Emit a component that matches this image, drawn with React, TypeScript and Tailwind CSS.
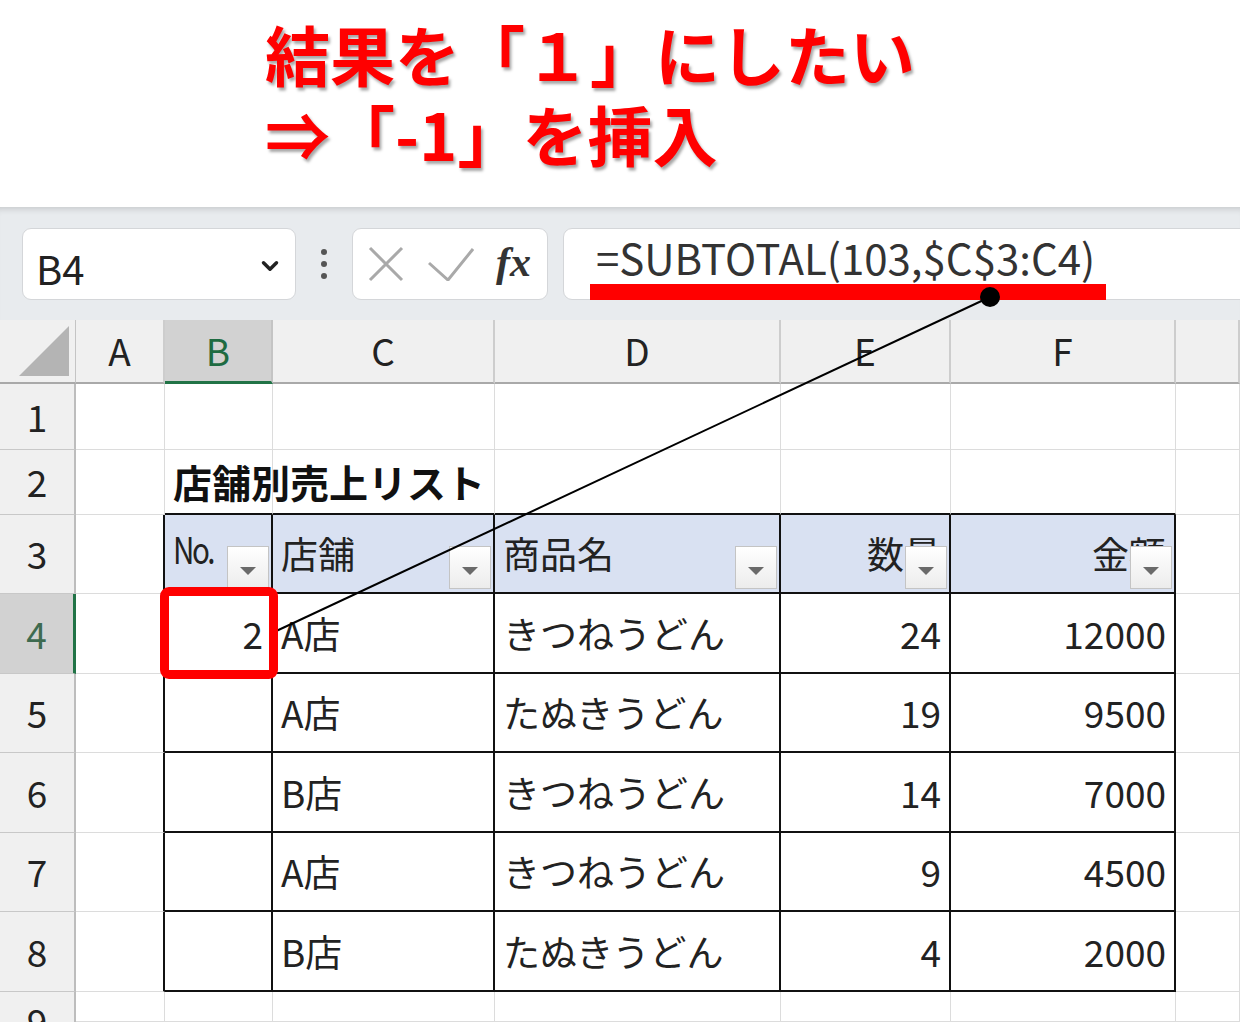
import { ChevronDown } from 'lucide-react';

const letters = ['A', 'B', 'C', 'D', 'E', 'F', ''];

type Cell = { text: string; align?: 'left' | 'right'; bold?: boolean };

const rows: Record<number, Cell[]> = {
  2: [{ text: '' }, { text: '店舗別売上リスト', bold: true }],
  3: [{ text: '' }, { text: 'No.' }, { text: '店舗' }, { text: '商品名' }, { text: '数量', align: 'right' }, { text: '金額', align: 'right' }],
  4: [{ text: '' }, { text: '2', align: 'right' }, { text: 'A店' }, { text: 'きつねうどん' }, { text: '24', align: 'right' }, { text: '12000', align: 'right' }],
  5: [{ text: '' }, { text: '' }, { text: 'A店' }, { text: 'たぬきうどん' }, { text: '19', align: 'right' }, { text: '9500', align: 'right' }],
  6: [{ text: '' }, { text: '' }, { text: 'B店' }, { text: 'きつねうどん' }, { text: '14', align: 'right' }, { text: '7000', align: 'right' }],
  7: [{ text: '' }, { text: '' }, { text: 'A店' }, { text: 'きつねうどん' }, { text: '9', align: 'right' }, { text: '4500', align: 'right' }],
  8: [{ text: '' }, { text: '' }, { text: 'B店' }, { text: 'たぬきうどん' }, { text: '4', align: 'right' }, { text: '2000', align: 'right' }],
};

function FilterButton() {
  return (
    <div className="absolute right-[2px] bottom-[3px] w-[42px] h-[43px] border border-[#c4c4c4] bg-gradient-to-b from-white to-[#ececec] flex items-center justify-center pt-[6px]">
      <div className="w-0 h-0 border-l-[8px] border-r-[8px] border-t-[8px] border-l-transparent border-r-transparent border-t-[#6a6a6a]" />
    </div>
  );
}

function SheetCell({ r, c }: { r: number; c: number }) {
  const inTable = r >= 3 && r <= 8 && c >= 2 && c <= 6;
  const blackRight = inTable || (c === 1 && r >= 3 && r <= 8);
  const blackBottom = inTable || (r === 2 && c >= 2 && c <= 6);
  const cell = rows[r]?.[c - 1];
  const isHead = r === 3 && inTable;

  return (
    <div
      className={[
        'relative flex items-center px-2 overflow-visible',
        blackRight ? 'border-r-2 border-r-[#111]' : 'border-r border-r-[#dcdcdc]',
        blackBottom ? 'border-b-2 border-b-[#111]' : 'border-b border-b-[#dcdcdc]',
        isHead ? 'bg-[#d9e1f2]' : 'bg-white',
        cell?.align === 'right' ? 'justify-end' : 'justify-start',
      ].join(' ')}
    >
      {cell?.text && (
        <span
          className={
            cell.bold
              ? 'relative z-10 whitespace-nowrap text-[39px] font-bold text-[#111] leading-none'
              : cell.text === 'No.'
                ? 'whitespace-nowrap text-[37px] tracking-[-3px] text-[#222] leading-none pb-[10px] scale-x-[0.8] origin-left'
                : 'whitespace-nowrap text-[37px] text-[#222] leading-none'
          }
        >
          {cell.text}
        </span>
      )}
      {isHead && <FilterButton />}
    </div>
  );
}

export default function App() {
  const dataRows = [1, 2, 3, 4, 5, 6, 7, 8, 9];

  return (
    <div className="relative w-[1240px] h-[1022px] overflow-hidden bg-white font-['Noto_Sans_CJK_JP','Noto_Sans',sans-serif]">
      {/* heading */}
      <div className="h-[207px] pl-[265px] pt-[13px] text-[65px] font-bold leading-[80px] text-[#ff0000] [text-shadow:2px_3px_3px_rgba(0,0,0,0.35)]">
        <div>結果を「１」にしたい</div>
        <div>⇒「-1」を挿入</div>
      </div>

      {/* formula bar */}
      <div className="h-[113px] bg-[#e8ebee] shadow-[inset_0_7px_6px_-5px_rgba(0,0,0,0.15)] flex items-start pt-[21px] pl-[22px] overflow-hidden">
        <div className="shrink-0 w-[274px] h-[72px] bg-white border border-[#d4d6d9] rounded-[9px] flex items-center justify-between pl-[13px] pr-[12px]">
          <span className="text-[40px] text-[#222] leading-none pt-[8px]">B4</span>
          <ChevronDown size={26} strokeWidth={3.2} className="text-[#222] mt-[4px]" />
        </div>
        <div className="shrink-0 w-[56px] h-[72px] flex flex-col items-center justify-center gap-[6px]">
          <div className="w-[6px] h-[6px] rounded-full bg-[#555]" />
          <div className="w-[6px] h-[6px] rounded-full bg-[#555]" />
          <div className="w-[6px] h-[6px] rounded-full bg-[#555]" />
        </div>
        <div className="shrink-0 w-[196px] h-[72px] bg-white border border-[#d4d6d9] rounded-[9px] flex items-center pl-[15px]">
          <svg width="36" height="36" viewBox="0 0 36 36" className="shrink-0">
            <path d="M2 2 L34 34 M34 2 L2 34" stroke="#a9a9a9" strokeWidth="3" fill="none" />
          </svg>
          <svg width="46" height="34" viewBox="0 0 46 34" className="ml-[24px] shrink-0">
            <path d="M1 16 L20 33 L45 2" stroke="#a9a9a9" strokeWidth="3" fill="none" />
          </svg>
          <span className="ml-[22px] font-['Liberation_Serif',serif] italic font-bold text-[42px] text-[#333] leading-none pb-[4px]">
            fx
          </span>
        </div>
        <div className="shrink-0 ml-[15px] w-[720px] h-[72px] bg-white border border-[#d4d6d9] rounded-l-[9px] flex items-center pl-[32px] pb-[14px]">
          <span className="text-[42px] text-[#333] leading-none whitespace-nowrap">=SUBTOTAL(103,$C$3:C4)</span>
        </div>
      </div>

      {/* sheet */}
      <div className="grid grid-cols-[76px_89px_108px_222px_286px_170px_225px_1fr] grid-rows-[64px_66px_65px_79px_80px_79px_80px_79px_80px_30px]">
        <div className="relative bg-[#f0f0f0] border-r border-r-[#c4c4c4] border-b-2 border-b-[#a9a9a9]">
          <div className="absolute right-[6px] bottom-[6px] w-0 h-0 border-l-[50px] border-l-transparent border-b-[50px] border-b-[#b4b4b4]" />
        </div>
        {letters.map((l, i) => (
          <div
            key={i}
            className={
              l === 'B'
                ? 'flex items-center justify-center bg-[#d2d2d2] border-r-2 border-r-[#c4c4c4] border-b-[3px] border-b-[#217346] text-[37px] text-[#1e6b41]'
                : 'flex items-center justify-center bg-[#f0f0f0] border-r-2 border-r-[#cdcdcd] border-b-2 border-b-[#a9a9a9] text-[37px] text-[#222]'
            }
          >
            {l}
          </div>
        ))}
        {dataRows.map((r) => (
          <div key={r} className="contents">
            <div
              className={
                r === 4
                  ? 'flex items-center justify-center bg-[#d2d2d2] border-r-[3px] border-r-[#217346] border-b border-b-[#c8c8c8] text-[37px] text-[#3e6b50]'
                  : r === 9
                    ? 'flex items-start justify-center bg-[#f0f0f0] border-r-2 border-r-[#bdbdbd] text-[37px] text-[#222] pt-[10px] leading-none'
                    : 'flex items-center justify-center bg-[#f0f0f0] border-r-2 border-r-[#bdbdbd] border-b border-b-[#c8c8c8] text-[37px] text-[#222]'
              }
            >
              {r}
            </div>
            {[1, 2, 3, 4, 5, 6, 7].map((c) => (
              <SheetCell key={c} r={r} c={c} />
            ))}
          </div>
        ))}
      </div>

      {/* annotations */}
      <div className="absolute left-[590px] top-[284px] w-[516px] h-[16px] bg-[#ff0000]" />
      <svg className="absolute left-0 top-0 pointer-events-none" width="1240" height="1022">
        <line x1="990" y1="297" x2="272" y2="633" stroke="#000" strokeWidth="2" />
        <circle cx="990" cy="297" r="10" fill="#000" />
      </svg>
      <div className="absolute left-[160px] top-[587px] w-[118px] h-[92px] border-[9px] border-[#ff0000] rounded-[9px]" />
    </div>
  );
}
